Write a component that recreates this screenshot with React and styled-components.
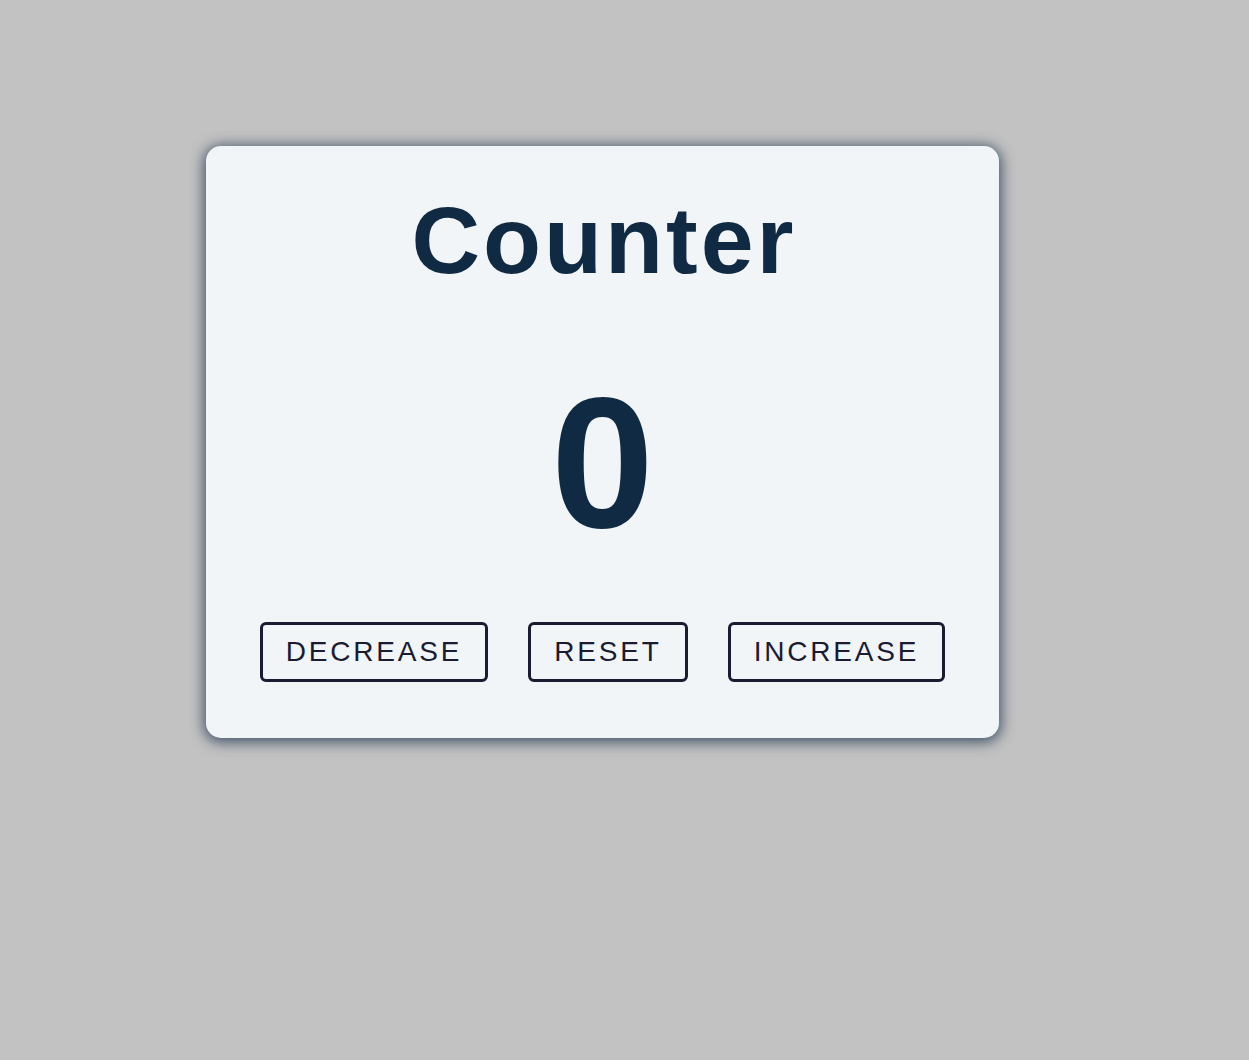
import { useState } from "react";
import styled, { createGlobalStyle } from "styled-components";

const GlobalStyle = createGlobalStyle`
  html, body {
    margin: 0;
    padding: 0;
    background: #c2c2c2;
    font-family: "Liberation Sans", Arial, sans-serif;
  }
`;

const Page = styled.main`
  min-height: 1060px;
  box-sizing: border-box;
  padding: 146px 0 0 206px;
`;

const Card = styled.section`
  width: 793px;
  height: 592px;
  box-sizing: border-box;
  padding-top: 41px;
  background: #f1f5f8;
  border-radius: 15px;
  box-shadow: 0 2px 14px 2px rgba(40, 60, 85, 0.85);
  display: flex;
  flex-direction: column;
  align-items: center;
`;

const Title = styled.h1`
  margin: 0;
  font-size: 95px;
  font-weight: 700;
  letter-spacing: 3px;
  padding-left: 3px;
  color: #102a43;
  line-height: 106px;
`;

const Value = styled.span`
  margin: 67px 0 55px;
  font-size: 185px;
  font-weight: 700;
  line-height: 207px;
  color: #102a43;
`;

const Buttons = styled.div`
  display: flex;
  gap: 40px;
`;

const Btn = styled.button`
  font-family: "Liberation Sans", Arial, sans-serif;
  font-size: 28px;
  line-height: 32px;
  letter-spacing: 0.1em;
  text-transform: uppercase;
  color: #1b1b32;
  background: transparent;
  border: 3px solid #1b1b32;
  border-radius: 6px;
  padding: 11px 23px;
  cursor: pointer;
`;

export default function App() {
  const [count, setCount] = useState(0);
  return (
    <>
      <GlobalStyle />
      <Page>
        <Card>
          <Title>Counter</Title>
          <Value>{count}</Value>
          <Buttons>
            <Btn onClick={() => setCount(count - 1)}>decrease</Btn>
            <Btn onClick={() => setCount(0)}>reset</Btn>
            <Btn onClick={() => setCount(count + 1)}>increase</Btn>
          </Buttons>
        </Card>
      </Page>
    </>
  );
}
